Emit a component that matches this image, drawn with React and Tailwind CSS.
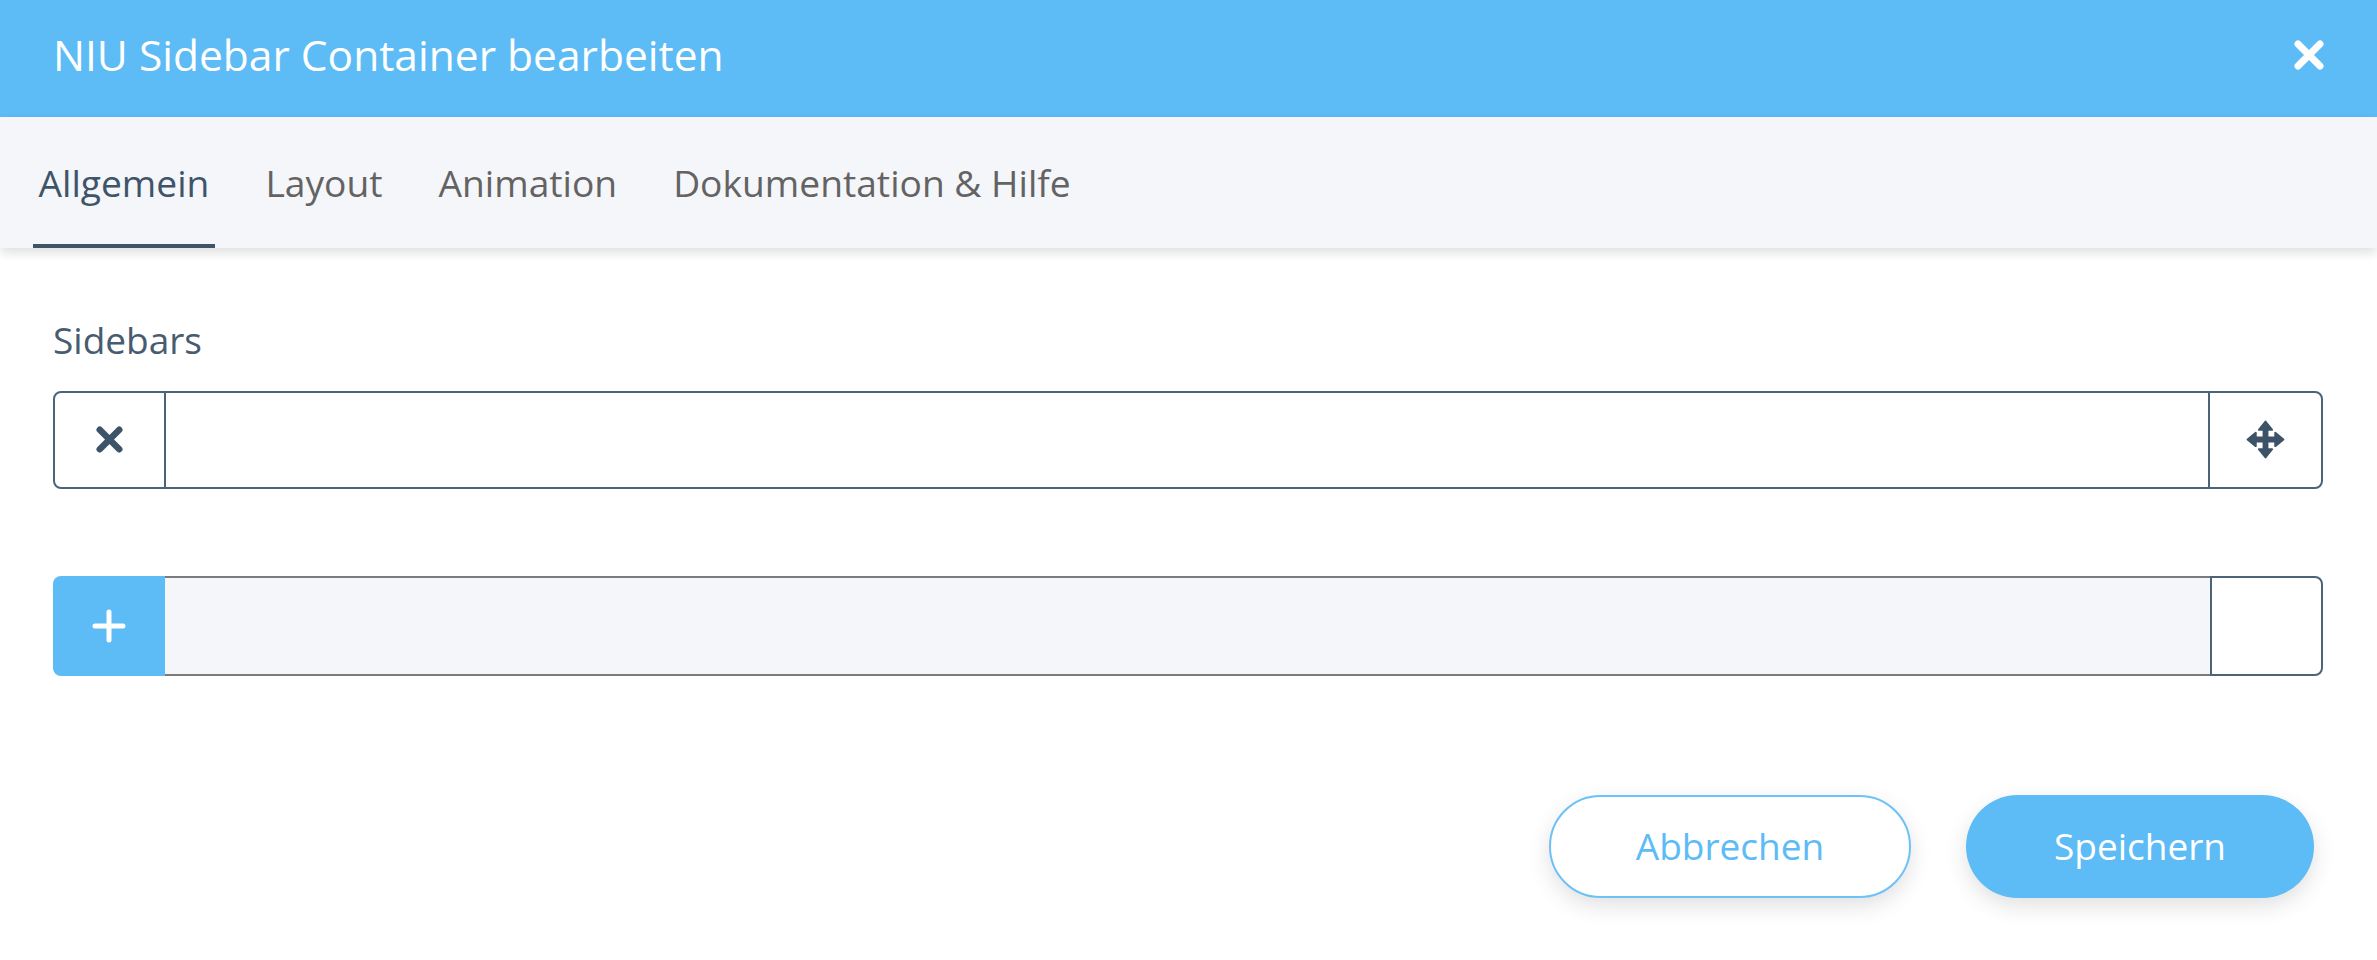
import React from "react";

function XIcon({ size, stroke, color }) {
  const p = stroke / 2 + 0.5;
  return (
    <svg width={size} height={size} viewBox={`0 0 ${size} ${size}`} fill="none">
      <path
        d={`M${p} ${p} L${size - p} ${size - p} M${size - p} ${p} L${p} ${size - p}`}
        stroke={color}
        strokeWidth={stroke}
        strokeLinecap="round"
      />
    </svg>
  );
}

function PlusIcon() {
  return (
    <svg width="34" height="34" viewBox="0 0 34 34" fill="none">
      <path d="M17 3 V31 M3 17 H31" stroke="#ffffff" strokeWidth="5" strokeLinecap="round" />
    </svg>
  );
}

function MoveIcon() {
  return (
    <svg width="39" height="39" viewBox="0 0 100 100">
      <g fill="#3d5367" stroke="#3d5367" strokeWidth="5" strokeLinejoin="round">
        <rect x="45" y="20" width="10" height="60" />
        <rect x="20" y="45" width="60" height="10" />
        <polygon points="50,4 67,25 33,25" />
        <polygon points="50,96 67,75 33,75" />
        <polygon points="4,50 25,33 25,67" />
        <polygon points="96,50 75,33 75,67" />
      </g>
    </svg>
  );
}

export default function App() {
  const tabs = ["Allgemein", "Layout", "Animation", "Dokumentation & Hilfe"];
  return (
    <div
      className="w-full h-[960px] bg-white flex flex-col overflow-hidden"
      style={{ fontFamily: '"Open Sans", "Noto Sans", sans-serif' }}
    >
      <div className="h-[117px] shrink-0 bg-[#5dbbf5] flex items-center justify-between pl-[53px] pr-[53px] pb-[8px]">
        <div className="text-[42.5px] text-white leading-normal">NIU Sidebar Container bearbeiten</div>
        <XIcon size={30} stroke={7} color="#ffffff" />
      </div>

      <div className="relative z-10 h-[131px] shrink-0 bg-[#f5f6fa] shadow-[0_5px_10px_rgba(0,0,0,0.12)] flex items-stretch pl-[33px] gap-[45px]">
        {tabs.map((t, i) => (
          <div
            key={t}
            className={
              i === 0
                ? "flex items-center px-[5.5px] pt-[5px] border-b-[4px] border-[#3e5468] text-[37.2px] text-[#3e5468]"
                : "flex items-center px-[5.5px] pt-[5px] border-b-[4px] border-transparent text-[37.2px] text-[#636363]"
            }
          >
            {t}
          </div>
        ))}
      </div>

      <div className="flex flex-col pl-[53px] pr-[54px] pt-[64px]">
        <div className="text-[37px] leading-normal text-[#475c70]">Sidebars</div>

        <div className="mt-[23px] h-[98px] border-2 border-[#4d6377] rounded-[8px] flex">
          <div className="w-[111px] border-r-2 border-[#4d6377] flex items-center justify-center">
            <XIcon size={27} stroke={6.5} color="#3d5367" />
          </div>
          <div className="flex-1" />
          <div className="w-[113px] border-l-2 border-[#4d6377] flex items-center justify-center">
            <MoveIcon />
          </div>
        </div>

        <div className="mt-[87px] h-[100px] flex">
          <div className="w-[112px] bg-[#5dbbf5] rounded-l-[8px] flex items-center justify-center">
            <PlusIcon />
          </div>
          <div className="flex-1 bg-[#f5f6fa] border-t-2 border-b-2 border-[#7b7b7b]" />
          <div className="w-[113px] bg-white border-2 border-[#4d6377] rounded-r-[8px]" />
        </div>

        <div className="mt-[119px] flex justify-end gap-[55px] pr-[9px]">
          <button className="w-[362px] h-[103px] rounded-full border-2 border-[#6cc2f7] bg-white text-[#5dbbf5] text-[37px] shadow-[0_8px_22px_rgba(0,0,0,0.12)]">
            Abbrechen
          </button>
          <button className="w-[348px] h-[103px] rounded-full bg-[#5dbbf5] text-white text-[37px] shadow-[0_8px_22px_rgba(0,0,0,0.12)]">
            Speichern
          </button>
        </div>
      </div>
    </div>
  );
}
